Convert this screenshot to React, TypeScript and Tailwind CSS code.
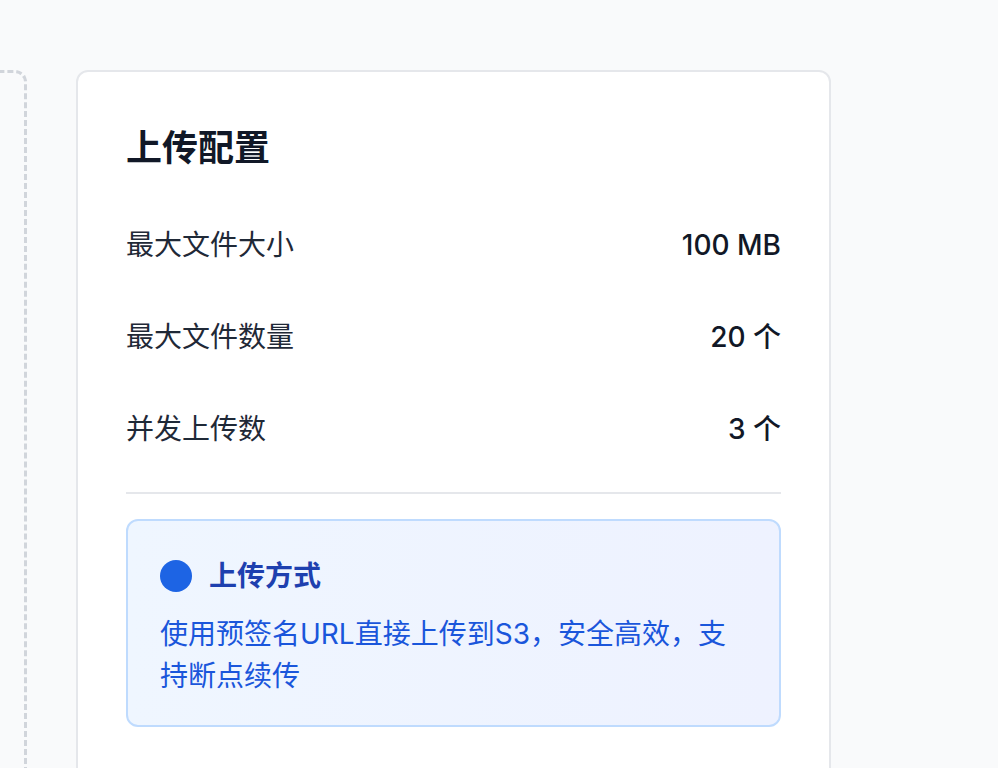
import React from "react";

const rows = [
  { label: "最大文件大小", value: "100 MB" },
  { label: "最大文件数量", value: "20 个" },
  { label: "并发上传数", value: "3 个" },
];

export default function App() {
  return (
    <div
      className="h-[768px] w-[998px] overflow-hidden bg-[#f9fafb] flex items-start gap-[49px] pt-[70px]"
      style={{ fontFamily: 'Inter, "Noto Sans CJK SC", "Noto Sans", sans-serif' }}
    >
      <div className="shrink-0 w-[400px] -ml-[373px] h-[800px] border-[3px] border-dashed border-[#d1d5db] rounded-[12px]" />
      <div className="shrink-0 w-[755px] bg-white border-2 border-[#e5e7eb] rounded-[12px] px-[48px] pt-[48px] pb-[60px]">
        <h2 className="text-[36px] leading-[56px] font-bold text-[#111827]">上传配置</h2>
        <div className="mt-[23px]">
          {rows.map((r) => (
            <div key={r.label} className="flex justify-between items-center py-[26px] text-[28px] leading-[40px]">
              <span className="text-[#1f2937]">{r.label}</span>
              <span className="font-medium text-[#111827]">{r.value}</span>
            </div>
          ))}
        </div>
        <div className="mt-[17px] h-[2px] bg-[#e5e7eb]" />
        <div className="mt-[25px] border-2 border-[#bfdbfe] rounded-[12px] bg-gradient-to-r from-[#eff6ff] to-[#eef2ff] px-[32px] pt-[32px] pb-[28px]">
          <div className="flex items-center h-[46px] gap-[17px]">
            <span className="w-[32px] h-[32px] rounded-full bg-[#1d64e4] shrink-0" />
            <span className="text-[28px] font-bold text-[#1e40af] leading-[40px]">上传方式</span>
          </div>
          <p className="mt-[14px] text-[28px] leading-[42px] text-[#1a56db]">
            使用预签名URL直接上传到S3，安全高效，支持断点续传
          </p>
        </div>
      </div>
    </div>
  );
}
